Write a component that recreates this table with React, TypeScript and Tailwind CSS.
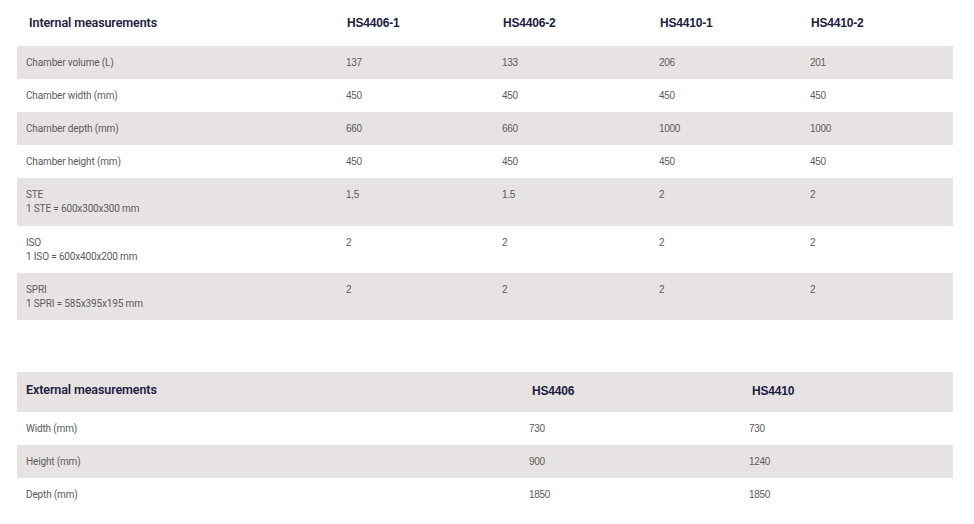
const internalCols = ["HS4406-1", "HS4406-2", "HS4410-1", "HS4410-2"];

type Row = { label: string; sub?: string; values: string[] };

const internalRows: Row[] = [
  { label: "Chamber volume (L)", values: ["137", "133", "206", "201"] },
  { label: "Chamber width (mm)", values: ["450", "450", "450", "450"] },
  { label: "Chamber depth (mm)", values: ["660", "660", "1000", "1000"] },
  { label: "Chamber height (mm)", values: ["450", "450", "450", "450"] },
  { label: "STE", sub: "1 STE = 600x300x300 mm", values: ["1,5", "1.5", "2", "2"] },
  { label: "ISO", sub: "1 ISO = 600x400x200 mm", values: ["2", "2", "2", "2"] },
  { label: "SPRI", sub: "1 SPRI = 585x395x195 mm", values: ["2", "2", "2", "2"] },
];

const externalRows: Row[] = [
  { label: "Width (mm)", values: ["730", "730"] },
  { label: "Height (mm)", values: ["900", "1240"] },
  { label: "Depth (mm)", values: ["1850", "1850"] },
];

const labelFont = "font-['Roboto','Liberation_Sans',sans-serif]";
const numFont = "font-['Liberation_Sans',Arial,sans-serif]";

export default function App() {
  return (
    <div className="min-h-screen bg-white pl-[17px] pr-[21px]">
      {/* Internal measurements */}
      <div className="text-[#5b5b5b]">
        <div className="grid grid-cols-[320px_156px_157px_151px_1fr] h-[46px] items-center text-[#1c2140]">
          <div className={`pl-[12px] text-[12.5px] font-semibold tracking-[-0.1px] ${labelFont}`}>
            Internal measurements
          </div>
          {internalCols.map((c) => (
            <div key={c} className={`pl-[10px] text-[12px] font-bold tracking-[-0.2px] ${numFont}`}>
              {c}
            </div>
          ))}
        </div>
        {internalRows.map((r, i) => (
          <div
            key={r.label}
            className={`grid grid-cols-[320px_156px_157px_151px_1fr] ${
              r.sub ? (i === 4 ? "h-[48px]" : "h-[47px]") + " items-start pt-[10px]" : "h-[33px] items-center"
            } ${i % 2 === 0 ? "bg-[#e8e3e3]" : "bg-white"}`}
          >
            <div className={`pl-[9px] text-[10px] leading-[14px] tracking-[-0.15px] ${labelFont}`}>
              <div>{r.label}</div>
              {r.sub && <div>{r.sub}</div>}
            </div>
            {r.values.map((v, j) => (
              <div key={j} className={`pl-[9px] text-[10px] leading-[14px] tracking-[-0.3px] ${numFont}`}>
                {v}
              </div>
            ))}
          </div>
        ))}
      </div>

      {/* External measurements */}
      <div className="mt-[52px] text-[#5b5b5b]">
        <div className="grid grid-cols-[503px_220px_1fr] h-[40px] items-center pb-[3px] bg-[#e8e3e3] text-[#1c2140]">
          <div className={`pl-[9px] text-[12.5px] font-semibold tracking-[-0.1px] ${labelFont}`}>
            External measurements
          </div>
          <div className={`pl-[12px] text-[12px] font-bold tracking-[-0.2px] ${numFont}`}>HS4406</div>
          <div className={`pl-[12px] text-[12px] font-bold tracking-[-0.2px] ${numFont}`}>HS4410</div>
        </div>
        {externalRows.map((r, i) => (
          <div
            key={r.label}
            className={`grid grid-cols-[503px_220px_1fr] h-[33px] items-center ${
              i % 2 === 1 ? "bg-[#e8e3e3]" : "bg-white"
            }`}
          >
            <div className={`pl-[9px] text-[10px] tracking-[-0.15px] ${labelFont}`}>{r.label}</div>
            {r.values.map((v, j) => (
              <div key={j} className={`pl-[9px] text-[10px] tracking-[-0.3px] ${numFont}`}>
                {v}
              </div>
            ))}
          </div>
        ))}
      </div>
    </div>
  );
}
